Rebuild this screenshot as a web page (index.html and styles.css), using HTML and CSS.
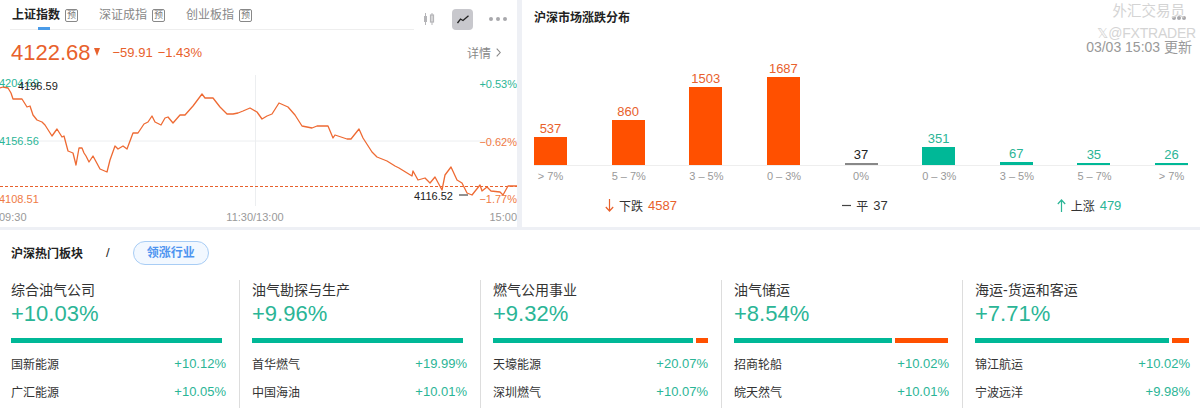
FILE: index.html
```html
<!DOCTYPE html>
<html lang="zh">
<head>
<meta charset="utf-8">
<title>行情</title>
<link rel="stylesheet" href="styles.css">
</head>
<body>
<div class="page">
  <div class="top">
    <section class="index">
      <div class="head">
        <div class="tabs">
          <div class="tab active"><span class="tab-name">上证指数</span><span class="badge">预</span></div>
          <div class="tab"><span class="tab-name">深证成指</span><span class="badge">预</span></div>
          <div class="tab"><span class="tab-name">创业板指</span><span class="badge">预</span></div>
        </div>
        <div class="tools">
          <svg class="ico-candle" width="12" height="12" viewBox="0 0 12 12"><path d="M2.5 0v12M9 0v12" stroke="#b5b5b8" stroke-width="1"/><rect x="1" y="3" width="3" height="6" fill="#b5b5b8"/><rect x="7.5" y="2" width="3" height="7" fill="none" stroke="#b5b5b8" stroke-width="1.2"/></svg>
          <div class="tool-on"><svg width="12" height="9" viewBox="0 0 12 9"><path d="M0.5 8 L3.5 4 L6 5.5 L11.5 0.8" fill="none" stroke="#222" stroke-width="1.3"/></svg></div>
          <div class="dots"><i></i><i></i><i></i></div>
        </div>
      </div>
      <div class="price-row">
        <span class="price">4122.68</span>
        <svg class="tri" width="6" height="8" viewBox="0 0 6 8"><path d="M0 0H6L3 8Z" fill="#e8612c"/></svg>
        <span class="change">−59.91</span>
        <span class="change">−1.43%</span>
        <span class="detail">详情<svg width="5" height="9" viewBox="0 0 5 9"><path d="M0.7 0.7L4.2 4.5L0.7 8.3" fill="none" stroke="#888" stroke-width="1.1"/></svg></span>
      </div>
      <svg class="chart" width="517" height="152" viewBox="0 75 517 152">
        <path d="M0 141H517" class="grid"/>
        <path d="M255.5 75V206" class="grid"/>
        <path d="M0 186.5H517" class="dash"/>
        <path class="line" d="M0 88 3 87 8 88 11 93 13 99 22 99 27 107 30 106 33 115 37 120 42 122 45 125 52 136 57 129 62 137 64 136 68 151 73 153 76 165 79 148 82 148 84 153 86 156 89 162 93 156 100 169 107 172 110 160 115 146 118 149 123 146 127 149 133 133 138 133 144 124 148 122 152 116 155 122 161 125 165 118 168 117 173 123 180 115 185 115 193 106 202 94 205 98 213 98 220 107 227 114 233 114 238 113 243 111 250 108 257 112 262 119 267 116 272 114 279 103 288 107 295 115 302 126 312 128 317 126 328 126 333 138 335 135 347 139 351 139 359 129 363 138 372 152 377 157 387 161 395 166 399 168 412 176 413 171 418 180 425 178 430 183 435 177 442 190 445 175 451 167 457 180 462 183 467 193 472 195 480 185 482 191 487 187 491 191 500 192 503 195 508 186 517 186"/>
        <text x="-1" y="87" class="t up">4204.69</text>
        <text x="18" y="90" class="t blk">4196.59</text>
        <text x="-1" y="145" class="t up">4156.56</text>
        <text x="-1" y="203" class="t dn">4108.51</text>
        <text x="517" y="88" class="t up end">+0.53%</text>
        <text x="517" y="146" class="t dn end">−0.62%</text>
        <text x="517" y="203" class="t dn end">−1.77%</text>
        <text x="414" y="200" class="t blk">4116.52</text>
        <path d="M459 195H468" stroke="#222" stroke-width="1"/>
        <text x="-1" y="221" class="t gray">09:30</text>
        <text x="255" y="221" class="t gray mid">11:30/13:00</text>
        <text x="517" y="221" class="t gray end">15:00</text>
      </svg>
    </section>
    <section class="dist">
      <div class="dist-head">
        <div class="dist-title">沪深市场涨跌分布</div>
        <div class="dist-meta">
          <div class="dots small"><i></i><i></i><i></i></div>
          <div class="stamp">03/03 15:03 更新</div>
        </div>
      </div>
      <div class="bars">
        <div class="bar-col dn"><span>537</span><i style="height:28px"></i></div>
        <div class="bar-col dn"><span>860</span><i style="height:45px"></i></div>
        <div class="bar-col dn"><span>1503</span><i style="height:78px"></i></div>
        <div class="bar-col dn"><span>1687</span><i style="height:88px"></i></div>
        <div class="bar-col flat"><span>37</span><i style="height:2px"></i></div>
        <div class="bar-col up"><span>351</span><i style="height:18px"></i></div>
        <div class="bar-col up"><span>67</span><i style="height:3px"></i></div>
        <div class="bar-col up"><span>35</span><i style="height:2px"></i></div>
        <div class="bar-col up"><span>26</span><i style="height:2px"></i></div>
      </div>
      <div class="axis">
        <span>&gt; 7%</span><span>5 – 7%</span><span>3 – 5%</span><span>0 – 3%</span><span>0%</span><span>0 – 3%</span><span>3 – 5%</span><span>5 – 7%</span><span>&gt; 7%</span>
      </div>
      <div class="legend">
        <div class="leg"><svg width="9" height="13" viewBox="0 0 9 13"><path d="M4.5 0V12M0.8 8L4.5 12L8.2 8" fill="none" stroke="#e8612c" stroke-width="1.2"/></svg><span class="leg-name">下跌</span><span class="leg-num dn">4587</span></div>
        <div class="leg"><svg width="9" height="13" viewBox="0 0 9 13"><path d="M0 6.5H9" stroke="#444" stroke-width="1.2"/></svg><span class="leg-name">平</span><span class="leg-num">37</span></div>
        <div class="leg"><svg width="9" height="13" viewBox="0 0 9 13"><path d="M4.5 13V1M0.8 5L4.5 1L8.2 5" fill="none" stroke="#2bb596" stroke-width="1.2"/></svg><span class="leg-name">上涨</span><span class="leg-num up">479</span></div>
      </div>
    </section>
  </div>
  <section class="sectors">
    <div class="sec-head">
      <span class="sec-title">沪深热门板块</span>
      <span class="slash">/</span>
      <span class="pill">领涨行业</span>
    </div>
    <div class="sec-grid">
      <div class="sec">
        <div class="sec-name">综合油气公司</div>
        <div class="sec-pct">+10.03%</div>
        <div class="split"><i class="g" style="width:211px"></i></div>
        <div class="row"><span>国新能源</span><b>+10.12%</b></div>
        <div class="row"><span>广汇能源</span><b>+10.05%</b></div>
      </div>
      <div class="sec">
        <div class="sec-name">油气勘探与生产</div>
        <div class="sec-pct">+9.96%</div>
        <div class="split"><i class="g" style="width:211px"></i></div>
        <div class="row"><span>首华燃气</span><b>+19.99%</b></div>
        <div class="row"><span>中国海油</span><b>+10.01%</b></div>
      </div>
      <div class="sec">
        <div class="sec-name">燃气公用事业</div>
        <div class="sec-pct">+9.32%</div>
        <div class="split"><i class="g" style="width:200px"></i><i class="r" style="width:12px"></i></div>
        <div class="row"><span>天壕能源</span><b>+20.07%</b></div>
        <div class="row"><span>深圳燃气</span><b>+10.07%</b></div>
      </div>
      <div class="sec">
        <div class="sec-name">油气储运</div>
        <div class="sec-pct">+8.54%</div>
        <div class="split"><i class="g" style="width:158px"></i><i class="r" style="width:53px"></i></div>
        <div class="row"><span>招商轮船</span><b>+10.02%</b></div>
        <div class="row"><span>皖天然气</span><b>+10.01%</b></div>
      </div>
      <div class="sec">
        <div class="sec-name">海运-货运和客运</div>
        <div class="sec-pct">+7.71%</div>
        <div class="split"><i class="g" style="width:194px"></i><i class="r" style="width:17px"></i></div>
        <div class="row"><span>锦江航运</span><b>+10.02%</b></div>
        <div class="row"><span>宁波远洋</span><b>+9.98%</b></div>
      </div>
    </div>
  </section>
  <div class="watermark">
    <div class="wm-a">外汇交易员</div>
    <div class="wm-b">𝕏@FXTRADER</div>
  </div>
</div>
</body>
</html>
```

FILE: styles.css
```css
* { box-sizing: border-box; }
html, body { margin: 0; padding: 0; }
body {
  background: #eef0f5;
  color: #333;
  font-family: "Liberation Sans", "Noto Sans CJK SC", sans-serif;
}
.page { position: relative; width: 1200px; height: 408px; overflow: hidden; }
.top { display: flex; gap: 5px; height: 227px; }

/* index card */
.index { width: 517px; background: #fff; }
.head { display: flex; height: 30px; }
.tabs { display: flex; width: 404px; margin-left: 10px; padding-left: 2px; gap: 21px; border-bottom: 1px solid #eee; }
.tab { position: relative; display: flex; gap: 5px; height: 29px; padding-top: 6px; color: #888; font-size: 12px; line-height: 18px; }
.tab.active { color: #222; font-weight: 700; }
.tab.active::after { content: ""; position: absolute; left: 26px; bottom: -1px; width: 12px; height: 3px; background: #4a9be8; }
.badge { width: 13px; height: 13px; margin-top: 3px; border: 1px solid #888; border-radius: 2px; font-size: 9px; font-weight: 400; line-height: 11px; text-align: center; color: #777; }
.tools { display: flex; align-items: center; padding: 8px 0 0 9px; height: 30px; }
.tool-on { display: flex; align-items: center; justify-content: center; width: 21px; height: 21px; margin-left: 17px; background: #c8c8cd; border-radius: 4px; }
.dots { display: flex; gap: 3px; margin-left: 16px; }
.dots i { width: 4px; height: 4px; border-radius: 50%; background: #a8a8ac; }
.price-row { display: flex; align-items: center; height: 45px; padding: 0 16px 0 11px; color: #e8612c; }
.price { font-size: 22px; line-height: 26px; }
.tri { margin: 0 13px 2px 3px; }
.change { margin-right: 5px; font-size: 13px; }
.detail { display: flex; align-items: center; gap: 5px; margin-left: auto; color: #888; font-size: 12px; }
.chart { display: block; overflow: hidden; }
.grid { stroke: #eceef0; stroke-width: 1; fill: none; }
.dash { stroke: #e8612c; stroke-width: 1; stroke-dasharray: 3 2; fill: none; }
.line { fill: none; stroke: #ee6a33; stroke-width: 1.3; stroke-linejoin: round; }
.t { font-size: 11px; }
.t.up { fill: #2bb596; }
.t.dn { fill: #ef7a45; }
.t.blk { fill: #222; }
.t.gray { fill: #999; }
.t.end { text-anchor: end; }
.t.mid { text-anchor: middle; }

/* distribution card */
.dist { flex: 1; min-width: 0; background: #fff; padding: 0 12px; }
.dist-head { display: flex; justify-content: space-between; height: 60px; }
.dist-title { margin-top: 9px; color: #222; font-size: 12px; font-weight: 700; line-height: 18px; }
.dist-meta { display: flex; flex-direction: column; align-items: flex-end; margin-right: -4px; }
.dots.small { gap: 1px; margin: 16px 6px 0 0; }
.stamp { margin-top: 18px; color: #999; font-size: 14px; line-height: 18px; white-space: nowrap; }
.bars { display: flex; justify-content: space-between; align-items: flex-end; height: 106px; border-bottom: 1px solid #eee; }
.bar-col { display: flex; flex-direction: column; align-items: center; width: 33px; font-size: 13px; line-height: 15px; }
.bar-col i { display: block; width: 100%; margin-top: 1px; }
.bar-col.dn { color: #e8612c; }
.bar-col.dn i { background: #ff5000; }
.bar-col.up { color: #2bb596; }
.bar-col.up i { background: #00b897; }
.bar-col.flat { color: #222; }
.bar-col.flat i { background: #888; }
.axis { display: flex; justify-content: space-between; margin-top: 3px; color: #999; font-size: 11px; line-height: 14px; }
.axis span { width: 33px; text-align: center; white-space: nowrap; }
.legend { display: grid; grid-template-columns: repeat(3, 1fr); margin: 12px -13px 0 -5px; }
.leg { display: flex; align-items: center; justify-content: center; height: 20px; font-size: 12px; color: #333; }
.leg-name { margin-left: 5px; }
.leg-num { margin-left: 5px; font-size: 13px; }
.leg-num.dn { color: #e8612c; }
.leg-num.up { color: #2bb596; }

/* sectors */
.sectors { height: 178px; margin-top: 3px; background: #fff; }
.sec-head { display: flex; align-items: center; height: 50px; padding: 7px 0 12px 11px; color: #222; font-size: 12px; }
.sec-title { font-weight: 700; }
.slash { margin: 0 23px 0 23px; font-size: 13px; }
.pill { width: 76px; height: 24px; border: 1px solid #a8cdf5; border-radius: 12px; background: #f2f8ff; color: #4d94f0; font-weight: 700; line-height: 22px; text-align: center; }
.sec-grid { display: grid; grid-template-columns: 239px repeat(3, 241px) 1fr; height: 128px; }
.sec { padding-left: 12px; border-left: 1px solid #ddd; }
.sec:first-child { padding-left: 11px; border-left: 0; }
.sec-name { color: #333; font-size: 14px; line-height: 20px; }
.sec-pct { margin-top: 1px; color: #2bb596; font-size: 22px; line-height: 26px; }
.split { display: flex; gap: 3px; width: 215px; height: 5px; margin-top: 11px; }
.split i { display: block; height: 100%; }
.split .g { background: #00b897; }
.split .r { background: #ff5000; }
.row { display: flex; justify-content: space-between; width: 215px; height: 28px; align-items: center; font-size: 12px; color: #333; }
.split + .row { margin-top: 6px; }
.row b { color: #2bb596; font-size: 13px; font-weight: 400; }

/* watermark */
.watermark { position: absolute; right: 4px; top: 2px; color: #d4d4d4; text-align: right; pointer-events: none; }
.wm-a { margin-right: 11px; font-size: 14.5px; line-height: 18px; }
.wm-b { margin-top: 4px; font-family: "Liberation Sans", "DejaVu Sans", sans-serif; font-size: 14px; line-height: 18px; letter-spacing: -0.2px; }
```
